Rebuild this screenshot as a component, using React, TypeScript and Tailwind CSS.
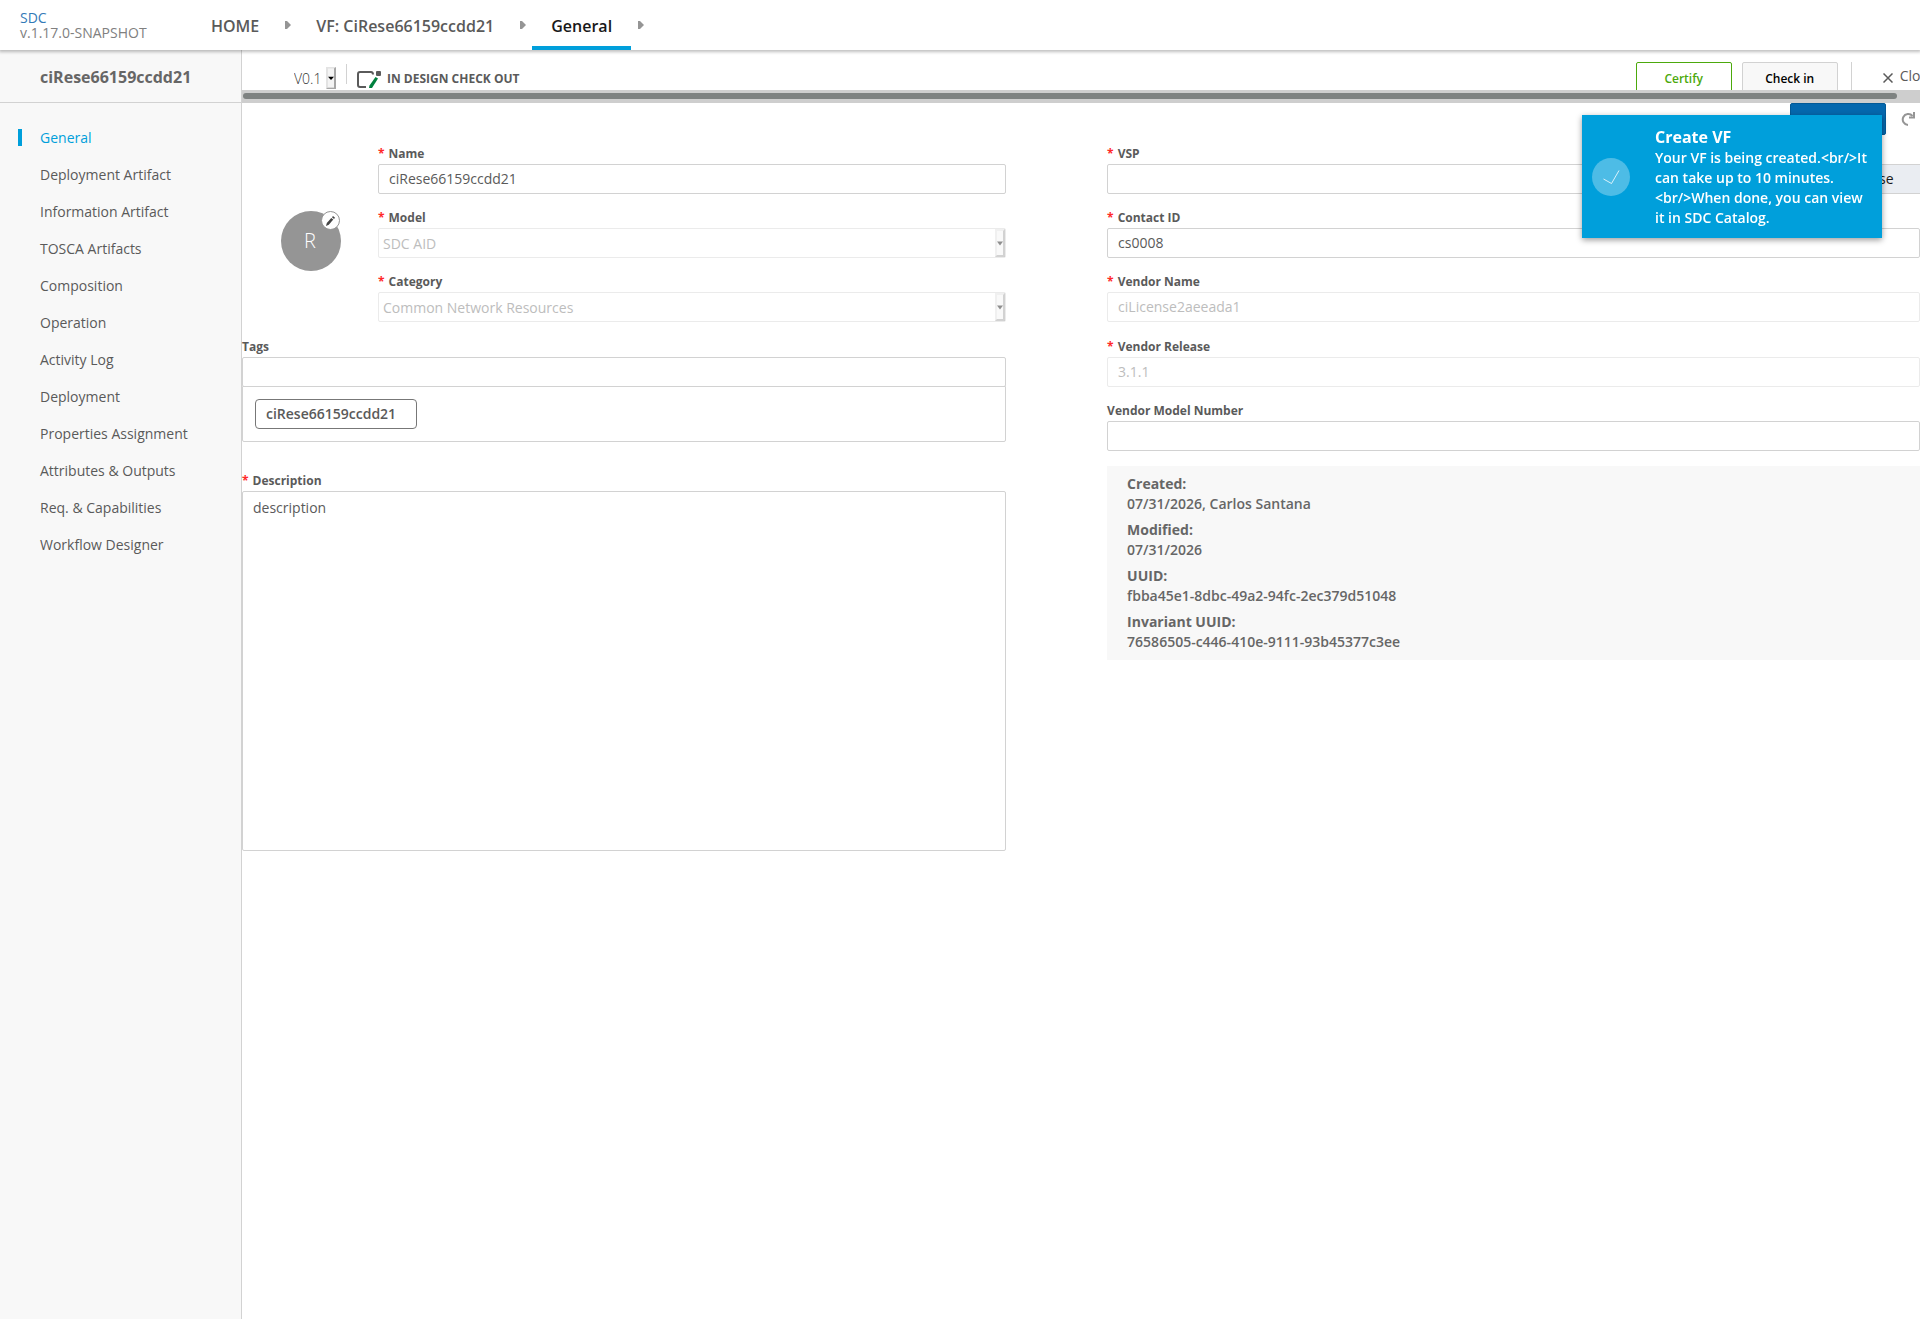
import { useState } from 'react';
import type { ReactNode } from 'react';

const MENU_ITEMS = [
    'General',
    'Deployment Artifact',
    'Information Artifact',
    'TOSCA Artifacts',
    'Composition',
    'Operation',
    'Activity Log',
    'Deployment',
    'Properties Assignment',
    'Attributes & Outputs',
    'Req. & Capabilities',
    'Workflow Designer',
];

const INFO = [
    { label: 'Created:', value: '07/31/2026, Carlos Santana' },
    { label: 'Modified:', value: '07/31/2026' },
    { label: 'UUID:', value: 'fbba45e1-8dbc-49a2-94fc-2ec379d51048' },
    { label: 'Invariant UUID:', value: '76586505-c446-410e-9111-93b45377c3ee' },
];

const INPUT = 'block w-full h-[30px] rounded-xs border border-[#d2d2d2] bg-white px-[10px] pb-[2px] text-sm text-[#5a5a5a] disabled:border-[#ebebeb] disabled:text-[#bdbdbd]';

function Field({ id, label, required, children }: { id: string; label: string; required?: boolean; children: ReactNode }) {
    return (
        <div>
            <label htmlFor={id} className="block h-5 text-xs leading-5 font-bold text-[#5a5a5a]">
                {required && <span className="mr-1 text-[#ff2a2a]">*</span>}
                {label}
            </label>
            {children}
        </div>
    );
}

// Old-style raised drop-down button
function SelectArrow({ disabled }: { disabled?: boolean }) {
    return (
        <svg
            viewBox="0 0 10 28"
            preserveAspectRatio="none"
            className={`pointer-events-none absolute top-px right-px bottom-px h-[calc(100%-2px)] w-[10px] ${disabled ? 'opacity-50' : ''}`}
        >
            <rect width="10" height="28" fill="#e3e3e3" />
            <path d="M10 0v28H0l2-2h6V2z" fill="#a6a6a6" />
            <rect x="2" y="2" width="6" height="24" fill="#f4f4f4" />
            <path d="M2 12.500h6l-3 4z" fill={disabled ? '#222' : '#000'} />
        </svg>
    );
}

function DisabledSelect({ id, value }: { id: string; value: string }) {
    return (
        <div className="relative">
            <select
                id={id}
                disabled
                className="block h-[30px] w-full appearance-none rounded-xs border border-[#ebebeb] bg-white px-1 pt-px text-sm text-[#bdbdbd] opacity-100"
            >
                <option>{value}</option>
            </select>
            <SelectArrow disabled />
        </div>
    );
}

function Crumb({ label, active }: { label: string; active?: boolean }) {
    return (
        <>
            <a
                href="#"
                className={`flex h-[50px] items-center border-b-4 px-[19px] pt-[6px] text-base font-semibold ${active ? 'border-[#009fdb] text-[#191919]' : 'border-transparent text-[#5a5a5a]'}`}
            >
                {label}
            </a>
            <span className="flex w-[19px] justify-center">
                <svg width="6" height="8" viewBox="0 0 6 8" fill="#959595">
                    <path d="M0 0h2l4 4-4 4H0z" />
                </svg>
            </span>
        </>
    );
}

function Header() {
    return (
        <header className="relative z-10 flex h-[50px] items-center bg-white shadow-[0_1px_3px_1px_rgba(0,0,0,0.25)]">
            <div className="w-48 shrink-0 pl-5 text-sm leading-[15px] text-[#808080]">
                <a href="#" className="block text-[#337ab7]">SDC</a>
                <span>v.1.17.0-SNAPSHOT</span>
            </div>
            <nav className="flex items-center">
                <Crumb label="HOME" />
                <Crumb label="VF: CiRese66159ccdd21" />
                <Crumb label="General" active />
            </nav>
        </header>
    );
}

function Sidebar() {
    return (
        <aside className="w-[242px] shrink-0 border-r border-[#d2d2d2] bg-[#f8f8f8]">
            <h1 className="flex h-[53px] items-center border-b border-[#d2d2d2] pt-[2px] pl-10 text-base font-bold text-[#666]">
                ciRese66159ccdd21
            </h1>
            <ul className="pt-4">
                {MENU_ITEMS.map((item, i) => (
                    <li key={item} className="flex h-[37px] items-center pl-[18px]">
                        <span className={`mr-[18px] h-[17px] w-1 ${i === 0 ? 'bg-[#009fdb]' : ''}`} />
                        <a href="#" className={`text-sm ${i === 0 ? 'text-[#009fdb]' : 'text-[#5a5a5a]'}`}>{item}</a>
                    </li>
                ))}
            </ul>
        </aside>
    );
}

function Toolbar() {
    return (
        <div>
            <div className="h-10 overflow-hidden">
                <div className="flex h-14 w-[calc(100%+24px)] items-center text-[#5a5a5a]">
                    <div className="relative ml-[52px] h-[24px] w-[43px]">
                        <select aria-label="Version" className="block h-full w-full appearance-none bg-transparent pt-[2px] text-sm font-light text-[#333]">
                            <option>V0.1</option>
                        </select>
                        <SelectArrow />
                    </div>
                    <span className="mt-[14px] ml-[9px] h-5 w-px self-start bg-[#d2d2d2]" />
                    <svg width="24" height="18" viewBox="0 0 24 18" className="mt-[3px] ml-[10px]">
                        <path d="M9 16H3Q1 16 1 14V3Q1 1 3 1H14q2 0 2 2.500" fill="none" stroke="#5a5a5a" strokeWidth="2" />
                        <rect x="19" y="0" width="5" height="5" rx="1" fill="#5a5a5a" />
                        <path d="M18.500 6l2.500 1.500-6 9.500h-3l.5-2.500z" fill="#00803e" />
                    </svg>
                    <span className="ml-[6px] pt-px text-xs font-bold">IN DESIGN CHECK OUT</span>
                    <div className="ml-auto flex shrink-0 items-center">
                        <button className="h-8 w-24 rounded-xs border border-[#4ca90c] bg-white pt-px text-xs font-semibold text-[#4ca90c]">Certify</button>
                        <button className="ml-[10px] h-8 w-24 rounded-xs border border-[#d2d2d2] bg-[#f8f8f8] pt-px text-xs font-semibold text-black">Check in</button>
                        <span className="ml-[13px] h-8 w-px bg-[#d2d2d2]" />
                        <button className="mr-[9px] mb-1 ml-[31px] flex items-center gap-[7px] text-sm">
                            <svg width="10" height="10" viewBox="0 0 10 10" stroke="#5a5a5a" strokeWidth="1.500" className="mt-1">
                                <path d="M.5.5l9 9M9.500.5l-9 9" />
                            </svg>
                            Close
                        </button>
                    </div>
                </div>
            </div>
            <div className="h-[13px] bg-[#cecece] pt-[3px] pr-[23px] pl-px">
                <div className="h-[6px] rounded-full bg-[#7e8281]" />
            </div>
        </div>
    );
}

function Avatar() {
    return (
        <div className="relative mt-[67px] ml-[39px] flex h-[60px] w-[60px] shrink-0 items-center justify-center rounded-full bg-[#959595] pr-[2px] text-xl font-light text-white">
            R
            <button aria-label="Edit icon" className="absolute top-0 right-px flex h-[19px] w-[19px] items-center justify-center rounded-full border border-[#959595] bg-white">
                <svg width="9" height="10" viewBox="0 0 9 10" fill="#444">
                    <path d="M0 10l.8-3L5.300 1.900l2 1.700L2.800 8.800z" />
                    <path d="M6 1.200L7 0l2 1.700-1 1.200z" />
                </svg>
            </button>
        </div>
    );
}

function Toast() {
    return (
        <div role="status" className="fixed top-[115px] right-[38px] z-20 flex h-[123px] w-[300px] items-center bg-[#009fdb] pl-[10px] text-white shadow-[0_2px_6px_rgba(0,0,0,0.4)]">
            <span className="mr-[25px] flex h-[38px] w-[38px] shrink-0 items-center justify-center rounded-full bg-white/30">
                <svg width="17" height="14" viewBox="0 0 17 14" fill="none" stroke="#fff" strokeOpacity="0.8" strokeWidth="1">
                    <path d="M.5 9l8 4.500L16 .5" />
                </svg>
            </span>
            <div className="pr-3 font-semibold">
                <div className="text-base leading-[22px] font-bold">Create VF</div>
                <div className="text-sm leading-5">{'Your VF is being created.<br/>It can take up to 10 minutes.<br/>When done, you can view it in SDC Catalog.'}</div>
            </div>
        </div>
    );
}

export default function App() {
    const [name, setName] = useState('ciRese66159ccdd21');
    const [contact, setContact] = useState('cs0008');

    return (
        <div className="flex min-h-screen flex-col overflow-hidden bg-white font-['Open_Sans',sans-serif]">
            <Header />
            <div className="flex flex-1">
                <Sidebar />
                <main className="min-w-0 flex-1">
                    <Toolbar />
                    <div className="flex h-8 items-center justify-end pr-[5px]">
                        <button aria-label="Create" className="h-8 w-24 rounded-xs border border-[#045a97] bg-[#0568ae]" />
                        <button aria-label="Refresh" className="ml-[15px]">
                            <svg width="14" height="14" viewBox="0 0 14 14" fill="none" stroke="#959595" strokeWidth="2">
                                <path d="M7 13A5.500 5.500 0 1 1 11.500 4" />
                                <path d="M13 0v5.500H8" />
                            </svg>
                        </button>
                    </div>

                    <form className="mt-[9px] grid grid-cols-[47fr_50fr] gap-[101px]">
                        <div className="flex flex-col">
                            <div className="flex">
                                <Avatar />
                                <div className="ml-[37px] flex flex-1 flex-col gap-[14px]">
                                    <Field id="name" label="Name" required>
                                        <input id="name" className={INPUT} value={name} onChange={(e) => setName(e.target.value)} />
                                    </Field>
                                    <Field id="model" label="Model" required>
                                        <DisabledSelect id="model" value="SDC AID" />
                                    </Field>
                                    <Field id="category" label="Category" required>
                                        <DisabledSelect id="category" value="Common Network Resources" />
                                    </Field>
                                </div>
                            </div>

                            <div className="mt-[15px]">
                                <Field id="tags" label="Tags">
                                    <input id="tags" className={INPUT} />
                                    <div className="-mt-px flex rounded-b-xs border border-[#d2d2d2] p-3">
                                        <span className="flex h-[30px] w-[162px] items-center rounded border border-[#777] pl-[10px] text-sm font-semibold text-[#5a5a5a]">
                                            ciRese66159ccdd21
                                        </span>
                                    </div>
                                </Field>
                            </div>

                            <div className="mt-[29px]">
                                <Field id="description" label="Description" required>
                                    <textarea
                                        id="description"
                                        defaultValue="description"
                                        className="block h-[360px] w-full resize-none rounded-xs border border-[#d2d2d2] px-[10px] py-[6px] text-sm text-[#5a5a5a]"
                                    />
                                </Field>
                            </div>
                        </div>

                        <div>
                            <div className="flex flex-col gap-[14px]">
                                <Field id="vsp" label="VSP" required>
                                    <div className="flex">
                                        <input id="vsp" className={INPUT} />
                                        <button type="button" className="flex h-[30px] w-[90px] shrink-0 items-center border-y border-[#d2d2d2] bg-[#eaedf2] pl-[15px] text-sm text-[#191919]">
                                            Browse
                                        </button>
                                    </div>
                                </Field>
                                <Field id="contact" label="Contact ID" required>
                                    <input id="contact" className={INPUT} value={contact} onChange={(e) => setContact(e.target.value)} />
                                </Field>
                                <Field id="vendor" label="Vendor Name" required>
                                    <input id="vendor" className={INPUT} disabled defaultValue="ciLicense2aeeada1" />
                                </Field>
                            </div>
                            <div className="mt-[15px] flex flex-col gap-[14px]">
                                <Field id="release" label="Vendor Release" required>
                                    <input id="release" className={INPUT} disabled defaultValue="3.1.1" />
                                </Field>
                                <Field id="modelNumber" label="Vendor Model Number">
                                    <input id="modelNumber" className={INPUT} />
                                </Field>
                            </div>
                            <dl className="mt-[15px] flex flex-col gap-[6px] bg-[#f8f8f8] px-5 py-2 text-sm leading-5 text-[#666]">
                                {INFO.map((row) => (
                                    <div key={row.label}>
                                        <dt className="font-bold">{row.label}</dt>
                                        <dd className="font-semibold">{row.value}</dd>
                                    </div>
                                ))}
                            </dl>
                        </div>
                    </form>
                </main>
            </div>
            <Toast />
        </div>
    );
}
